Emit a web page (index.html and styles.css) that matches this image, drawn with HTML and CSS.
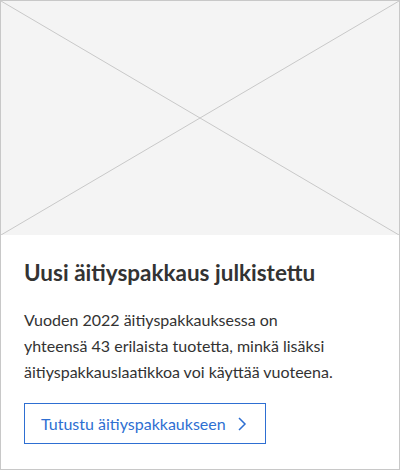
FILE: index.html
```html
<!DOCTYPE html>
<html lang="fi">
<head>
    <meta charset="UTF-8">
    <meta name="viewport" content="width=device-width, initial-scale=1.0">
    <title>Äitiyspakkaus</title>
    <link rel="stylesheet" href="styles.css">
</head>
<body>
    <div class="card">
        <div class="card-image">
            <svg class="placeholder" viewBox="0 0 398 234" preserveAspectRatio="none">
                <line x1="0" y1="0" x2="398" y2="234" />
                <line x1="398" y1="0" x2="0" y2="234" />
            </svg>
        </div>
        <div class="card-body">
            <h2 class="card-title">Uusi äitiyspakkaus julkistettu</h2>
            <p class="card-text">Vuoden 2022 äitiyspakkauksessa on yhteensä 43 erilaista tuotetta, minkä lisäksi äitiyspakkauslaatikkoa voi käyttää vuoteena.</p>
            <a class="card-button" href="#">
                Tutustu äitiyspakkaukseen
                <svg class="chevron" viewBox="0 0 10 16">
                    <polyline points="2,2 8,8 2,14" />
                </svg>
            </a>
        </div>
    </div>
</body>
</html>
```

FILE: styles.css
```css
body {
    margin: 0;
    font-family: Lato, "Open Sans", sans-serif;
    color: #333;
}
.card {
    width: 400px;
    height: 470px;
    box-sizing: border-box;
    border: 1px solid #c8c8c8;
    background: #fff;
}
.card-image {
    height: 234px;
    background-color: #f4f4f4;
}
.placeholder {
    display: block;
    width: 100%;
    height: 100%;
}
.placeholder line {
    stroke: #c8c8c8;
    stroke-width: 1;
}
.card-body {
    padding: 22px 23px 0;
}
.card-title {
    margin: 0;
    font-size: 22.5px;
    font-weight: 700;
    line-height: 32px;
    color: #333;
}
.card-text {
    max-width: 318px;
    margin: 18px 0 0;
    font-size: 16px;
    line-height: 26px;
    color: #333;
}
.card-button {
    display: inline-flex;
    align-items: center;
    margin-top: 18px;
    height: 41px;
    box-sizing: border-box;
    padding: 0 18px 0 16px;
    border: 1px solid #2e6fd2;
    color: #2e6fd2;
    font-size: 16px;
    text-decoration: none;
}
.chevron {
    width: 10px;
    height: 16px;
    margin-left: 11px;
}
.chevron polyline {
    fill: none;
    stroke: #2e6fd2;
    stroke-width: 1.5;
}
```
